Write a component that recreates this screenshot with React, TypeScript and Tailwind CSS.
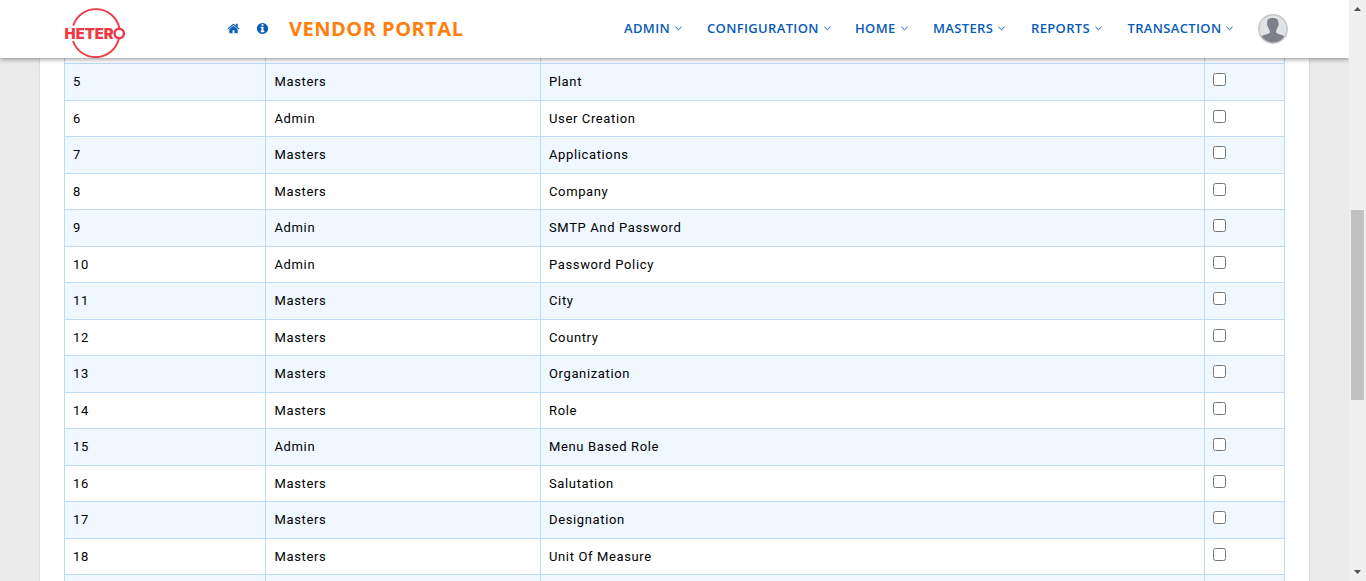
import React from "react";

const rows: [number, string, string][] = [
  [5, "Masters", "Plant"],
  [6, "Admin", "User Creation"],
  [7, "Masters", "Applications"],
  [8, "Masters", "Company"],
  [9, "Admin", "SMTP And Password"],
  [10, "Admin", "Password Policy"],
  [11, "Masters", "City"],
  [12, "Masters", "Country"],
  [13, "Masters", "Organization"],
  [14, "Masters", "Role"],
  [15, "Admin", "Menu Based Role"],
  [16, "Masters", "Salutation"],
  [17, "Masters", "Designation"],
  [18, "Masters", "Unit Of Measure"],
];

const menu = [
  { label: "ADMIN", width: "w-[83px]" },
  { label: "CONFIGURATION", width: "w-[148px]" },
  { label: "HOME", width: "w-[78px]" },
  { label: "MASTERS", width: "w-[98px]" },
  { label: "REPORTS", width: "w-[96.5px]" },
  { label: "TRANSACTION", width: "w-[130.5px]" },
];

function Logo() {
  return (
    <svg width="64" height="54" viewBox="0 0 64 54" className="shrink-0">
      <g fill="none" stroke="#ee3a44">
        <path d="M9.200 21.600A23.900 23.900 0 0 1 55.300 24M9 37A23.900 23.900 0 0 0 54.800 35" strokeWidth="1.9" />
        <circle cx="55.200" cy="29.500" r="4.700" strokeWidth="2.400" />
      </g>
      <text x="0.6" y="34.9" fontSize="14.5" fontWeight="900" textLength="49" lengthAdjust="spacingAndGlyphs" fill="#ee3a44" fontFamily="Inter, sans-serif">
        HETER
      </text>
    </svg>
  );
}

function HomeIcon() {
  return (
    <svg width="13" height="13" viewBox="0 0 1792 1792" fill="currentColor">
      <path d="M1472 992v480q0 26-19 45t-45 19h-384v-384h-256v384h-384q-26 0-45-19t-19-45v-480q0-1 .5-3t.5-3l575-474 575 474q1 2 1 6zm223-69l-62 74q-8 9-21 11h-3q-13 0-21-7l-692-577-692 577q-12 8-24 7-13-2-21-11l-62-74q-8-10-7-23.5t11-21.5l719-599q32-26 76-26t76 26l244 204v-195q0-14 9-23t23-9h192q14 0 23 9t9 23v408l219 182q10 8 11 21.5t-7 23.5z" />
    </svg>
  );
}

function InfoIcon() {
  return (
    <svg width="13" height="13" viewBox="0 0 1792 1792" fill="currentColor">
      <path d="M1152 1376v-160q0-14-9-23t-23-9h-96v-512q0-14-9-23t-23-9h-320q-14 0-23 9t-9 23v160q0 14 9 23t23 9h96v320h-96q-14 0-23 9t-9 23v160q0 14 9 23t23 9h448q14 0 23-9t9-23zm-128-896v-160q0-14-9-23t-23-9h-192q-14 0-23 9t-9 23v160q0 14 9 23t23 9h192q14 0 23-9t9-23zm640 416q0 209-103 385.5t-279.5 279.5-385.5 103-385.5-103-279.5-279.5-103-385.5 103-385.5 279.5-279.5 385.5-103 385.5 103 279.5 279.5 103 385.5z" />
    </svg>
  );
}

function Avatar() {
  return (
    <svg width="30" height="30" viewBox="0 0 30 30">
      <clipPath id="face">
        <circle cx="15" cy="15" r="13.5" />
      </clipPath>
      <circle cx="15" cy="15" r="14.2" fill="#e0e3e5" stroke="#c8c8c8" strokeWidth="1.6" />
      <path
        clipPath="url(#face)"
        fill="#7d8088"
        d="M9.200 7C9.600 4.800 12 4 15 4c4 0 5.600 2 5.400 5.500.600 1 .2 2.600-.7 3.300-.3 1.700-.9 2.700-1.500 3.300v2.600c1.500 1.800 7 1.600 8.300 4V29H3.500v-6.300c1.300-2.400 7-2.200 8.200-4v-2.600c-.9-.8-1.400-1.800-1.600-3.300-1-.8-1.300-2-.9-3.300z"
      />
    </svg>
  );
}

export default function App() {
  return (
    <div className="flex h-[581px] w-full overflow-hidden bg-[#ebebeb] font-[Roboto,sans-serif]">
      <div className="flex min-w-0 flex-1 flex-col overflow-hidden">
        <header className="relative z-10 flex h-[58px] shrink-0 bg-white pl-16 text-[#0a5cb8] shadow-[0_1px_5px_rgba(0,0,0,0.45)]">
          <div className="w-[163px] pt-1">
            <Logo />
          </div>
          <div className="flex w-[397px] items-center">
            <span className="w-[29px] pb-px"><HomeIcon /></span>
            <span className="w-[33px] pb-px"><InfoIcon /></span>
            <h1 className="font-['Open_Sans',sans-serif] text-xl font-bold tracking-[0.5px] text-[#ff7f0e]">VENDOR PORTAL</h1>
          </div>
          <nav className="flex items-center font-['Open_Sans',sans-serif] text-[13px] font-semibold tracking-[0.35px]">
            {menu.map((m) => (
              <a key={m.label} className={`flex items-center gap-[5px] ${m.width}`}>
                {m.label}
                <svg width="7" height="5" viewBox="0 0 7 5" fill="none" stroke="currentColor" className="mb-px">
                  <path d="M.4.8 3.500 3.800 6.600.8" />
                </svg>
              </a>
            ))}
          </nav>
          <div className="pt-3.5">
            <Avatar />
          </div>
        </header>
        <main className="mx-[39px] h-[523px] overflow-hidden border-x border-[#dedede] bg-white px-6">
          <div className="border-r border-[#bedaf6] text-[13px] tracking-[0.63px] text-black">
            <div className="grid h-[5px] grid-cols-[201px_275px_664px_80px]">
              {[0, 1, 2, 3].map((c) => (
                <div key={c} className="border-l border-[#bedaf6]" />
              ))}
            </div>
            {rows.map(([n, group, name], i) => (
              <div
                key={n}
                className={`grid grid-cols-[201px_275px_664px_80px] border-t border-[#bedaf6] ${i % 2 ? "h-9 bg-white" : "h-[37px] bg-[#eff7ff]"}`}
              >
                <div className="border-l border-[#bedaf6] pt-2 pl-2">{n}</div>
                <div className="border-l border-[#bedaf6] pt-2 pl-[8.5px]">{group}</div>
                <div className="border-l border-[#bedaf6] pt-2 pl-2">{name}</div>
                <div className="border-l border-[#bedaf6] pt-[9px] pl-2">
                  <input type="checkbox" className="block size-[13px]" />
                </div>
              </div>
            ))}
            <div className="grid h-9 grid-cols-[201px_275px_664px_80px] border-t border-[#bedaf6] bg-[#eff7ff]">
              {[0, 1, 2, 3].map((c) => (
                <div key={c} className="border-l border-[#bedaf6]" />
              ))}
            </div>
          </div>
        </main>
      </div>
      <div className="flex w-[17px] shrink-0 flex-col items-center bg-[#f0f0f0]">
        <svg width="17" height="17" viewBox="0 0 17 17" fill="#505050" className="mb-[193px] shrink-0">
          <path d="M5 11 8.500 7 12 11z" />
        </svg>
        <div className="h-[190px] w-[13px] bg-[#c1c1c1]" />
        <svg width="17" height="17" viewBox="0 0 17 17" fill="#505050" className="mt-auto shrink-0">
          <path d="M5 6 8.500 10 12 6z" />
        </svg>
      </div>
    </div>
  );
}
